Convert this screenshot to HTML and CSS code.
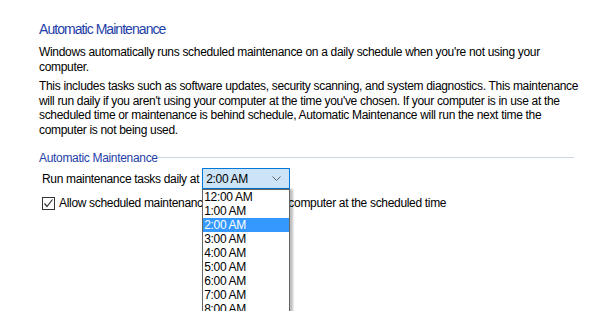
FILE: index.html
```html
<!DOCTYPE html>
<html lang="en">

<head>
    <meta charset="UTF-8">
    <meta name="viewport" content="width=device-width, initial-scale=1.0">
    <title>Automatic Maintenance</title>
    <link rel="stylesheet" href="styles.css">
</head>

<body>
    <div class="page">
        <h1 class="title">Automatic Maintenance</h1>
        <p class="intro">Windows automatically runs scheduled maintenance on a daily schedule when you're not using your computer.</p>
        <p class="intro">This includes tasks such as software updates, security scanning, and system diagnostics. This maintenance will run daily if you aren't using your computer at the time you've chosen. If your computer is in use at the scheduled time or maintenance is behind schedule, Automatic Maintenance will run the next time the computer is not being used.</p>

        <div class="group">
            <div class="group-head">
                <span class="group-label">Automatic Maintenance</span>
                <span class="group-line"></span>
            </div>

            <div class="row">
                <span>Run maintenance tasks daily at</span>
                <div class="combo">
                    <div class="combo-box">
                        <span>2:00 AM</span>
                        <svg class="chevron" width="9" height="6" viewBox="0 0 9 6">
                            <path d="M0.5 0.5 L4.5 4.5 L8.5 0.5" fill="none" stroke="#606060" stroke-width="1"/>
                        </svg>
                    </div>
                    <ul class="combo-list">
                        <li>12:00 AM</li>
                        <li>1:00 AM</li>
                        <li class="selected">2:00 AM</li>
                        <li>3:00 AM</li>
                        <li>4:00 AM</li>
                        <li>5:00 AM</li>
                        <li>6:00 AM</li>
                        <li>7:00 AM</li>
                        <li>8:00 AM</li>
                    </ul>
                </div>
            </div>

            <label class="row check-row">
                <span class="checkbox">
                    <svg width="11" height="11" viewBox="0 0 11 11">
                        <path d="M1.5 5.5 L4 8.5 L9.5 1.5" fill="none" stroke="#333" stroke-width="1.2"/>
                    </svg>
                </span>
                <span>Allow scheduled maintenance to wake up my computer at the scheduled time</span>
            </label>
        </div>
    </div>
</body>

</html>
```

FILE: styles.css
```css
html {
    overflow: hidden;
}

body {
    margin: 0;
    background: #fff;
}

.page {
    box-sizing: border-box;
    height: 100vh;
    padding: 19px 20px 0 39px;
    font-family: "Segoe UI", "Liberation Sans", Arial, sans-serif;
    font-size: 12px;
    letter-spacing: -0.32px;
    color: #000;
}

.title {
    margin: 0;
    font-size: 14px;
    font-weight: normal;
    line-height: 20px;
    letter-spacing: -0.95px;
    color: #1e3ea8;
}

.intro {
    margin: 6px 0 0;
    line-height: 14.5px;
}

.intro + .intro {
    margin-top: 5px;
}

.group {
    margin-top: 13px;
}

.group-head {
    display: flex;
    align-items: center;
    height: 16px;
    margin-right: 6px;
}

.group-label {
    color: #1e3ea8;
}

.group-line {
    flex: 1;
    height: 1px;
    margin-top: -2px;
    background: #ccd5e2;
}

.row {
    display: flex;
    align-items: center;
    padding-left: 3px;
}

.group-head + .row {
    margin-top: 2px;
}

.combo {
    position: relative;
    z-index: 10;
    margin-left: 3px;
}

.combo-box {
    display: flex;
    align-items: center;
    justify-content: space-between;
    box-sizing: border-box;
    width: 88px;
    height: 21px;
    padding: 0 8px 0 3px;
    background: #cce4f7;
    border: 1px solid #0078d7;
}

.combo-list {
    position: absolute;
    top: 21px;
    left: 0;
    box-sizing: border-box;
    width: 88px;
    margin: 0;
    padding: 0;
    list-style: none;
    background: #fff;
    border: 1px solid #646464;
    box-shadow: 3px 0 2px rgba(0, 0, 0, 0.25);
}

.combo-list > li {
    height: 14px;
    line-height: 14px;
    padding-left: 1px;
}

.combo-list > li.selected {
    background: #3399ff;
    color: #fff;
}

.check-row {
    margin-top: 7px;
}

.checkbox {
    display: flex;
    align-items: center;
    justify-content: center;
    box-sizing: border-box;
    width: 13px;
    height: 13px;
    margin-right: 4px;
    border: 1px solid #333;
}
```
